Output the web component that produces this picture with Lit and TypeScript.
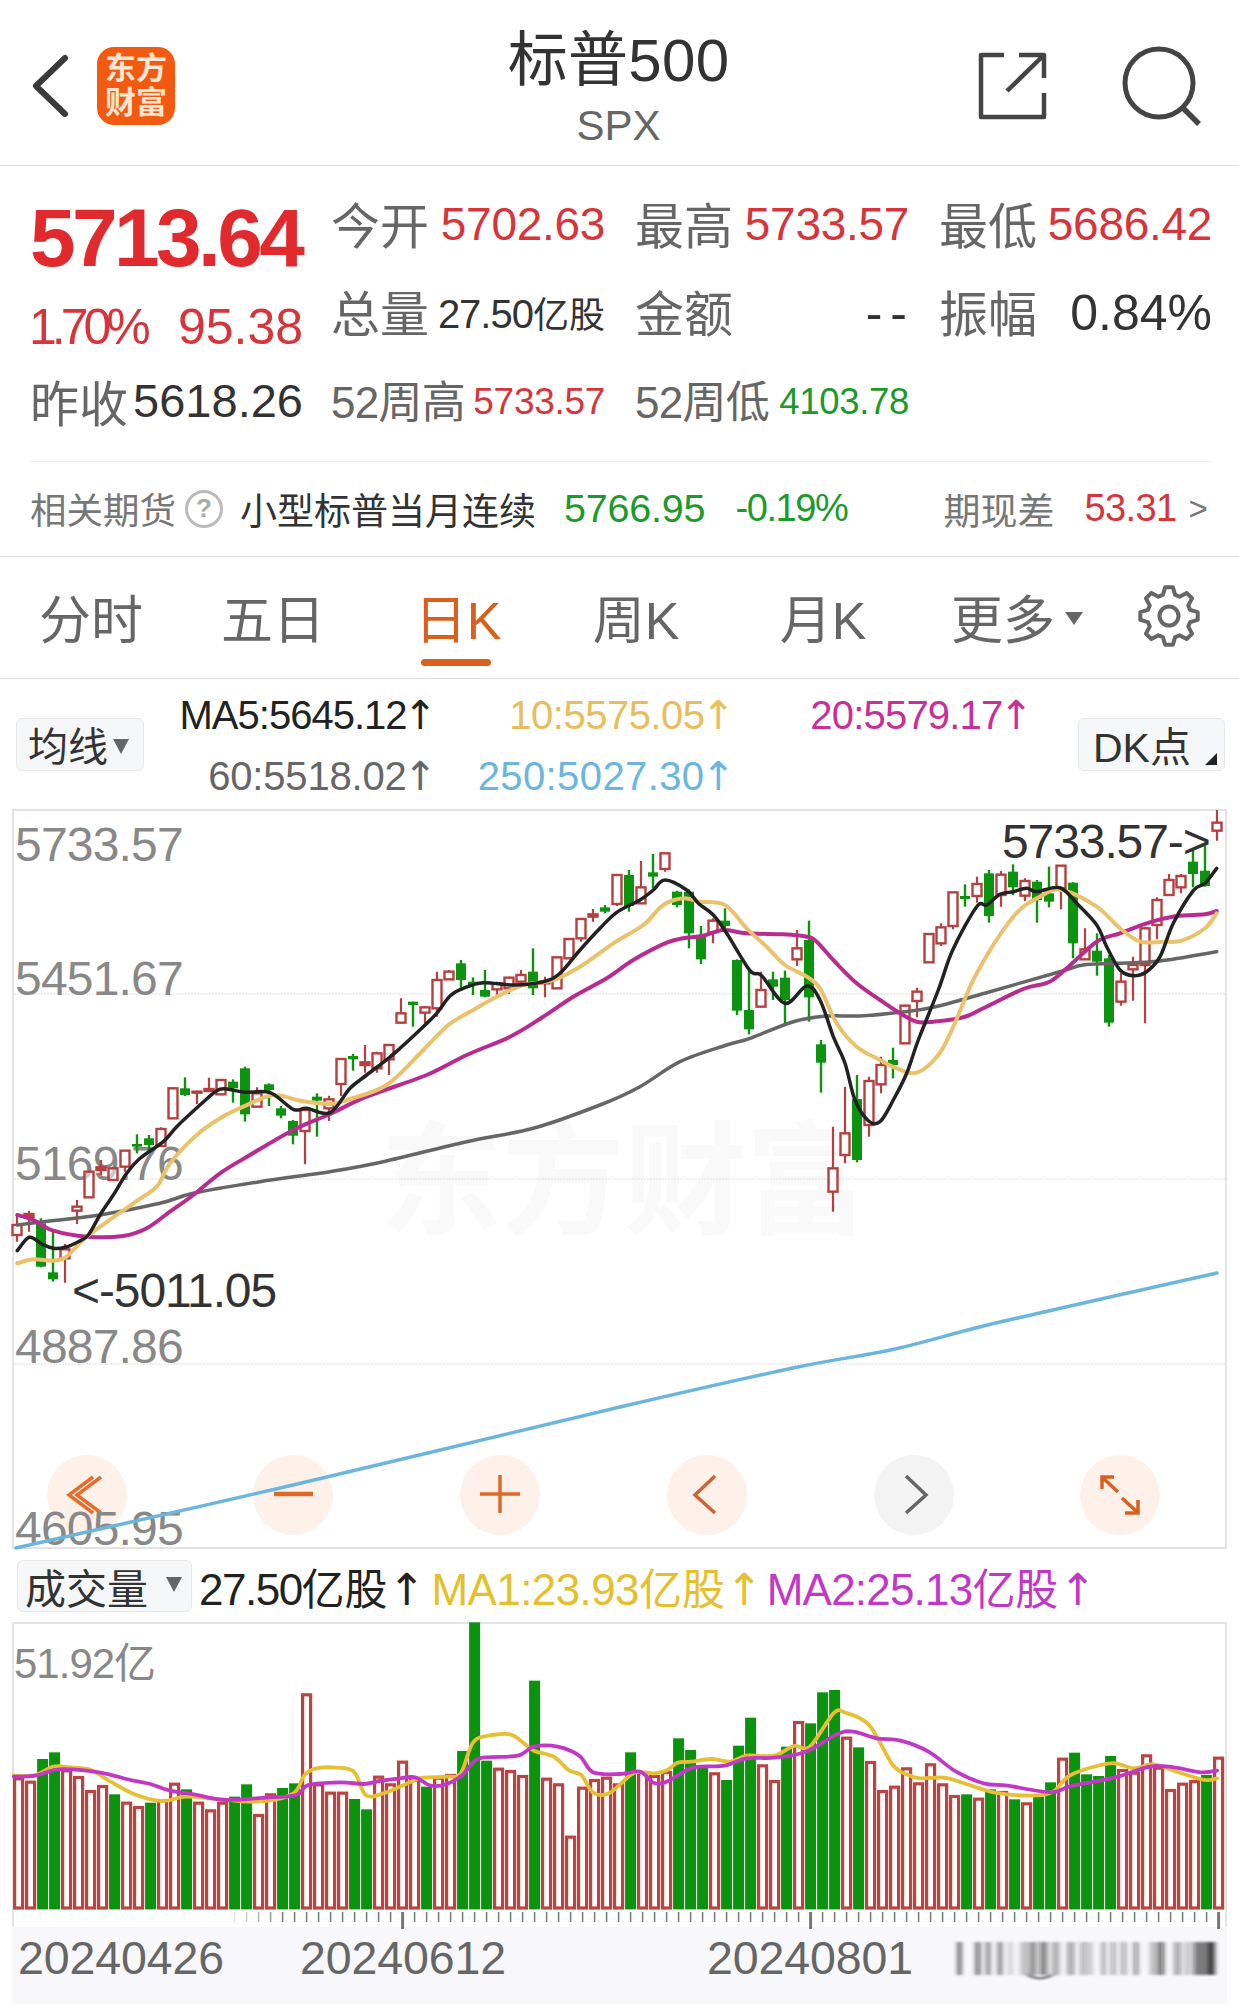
import { LitElement, html, css, svg } from "lit";
import { customElement } from "lit/decorators.js";

type P = [number, number];
const RED = "#b5403f";
const GREEN = "#0c930f";

const c11: [string, number, number, number, number][] = [
  ["r",525,555,585,605],["r",512,522,532,575],["g",535,550,680,682],["g",570,697,718,725],["r",612,628,655,728],
  ["r",480,500,512,552],["r",393,395,472,472],["r",360,382,390,405],["r",380,385,420,422],["r",330,332,380,395],
  ["g",283,312,320,340],["g",285,295,315,335],["r",262,267,318,320],["r",142,145,235,235],["g",112,145,165,168],
  ["r",152,155,157,193],["r",113,147,153,155],["r",118,120,163,165],["g",118,125,145,188],["g",80,85,223,245],
  ["r",142,160,200,202],["g",130,133,150,198],["g",198,205,227,235],["g",240,243,287,313],["r",205,210,273,373],
  ["g",160,170,182,290],["r",167,178,205,243],["r",55,57,132,168],["g",42,48,58,92],["r",15,67,75,98],
  ["r",35,40,85,98],["r",12,15,58,105],
];
const c5: [string, number, number, number, number][] = [
  ["r",595,640,668,670],["g",605,605,615,680],["r",620,622,638,670],["r",515,540,625,650],["r",510,515,538,540],
  ["g",480,490,540,565],["g",532,545,555,585],["g",510,570,590,592],["r",545,550,568,585],["r",530,533,565,582],
  ["r",510,525,545,550],["g",445,515,565,585],["r",530,545,550,592],["r",470,472,565,567],["r",415,417,475,477],
  ["r",355,357,415,425],["r",327,343,350,365],["g",315,322,335,340],["r",222,225,312,318],["g",210,225,318,335],
  ["r",183,262,310,312],["g",162,217,230,265],["r",158,160,207,215],["g",272,275,315,322],["g",268,275,400,445],
  ["g",378,405,478,492],["r",355,362,397,430],["g",325,362,378,385],["g",478,480,632,645],["g",510,630,688,703],
  ["r",515,570,620,622],["g",515,538,560,600],["g",512,533,600,670],["r",390,445,478,498],["g",362,420,592,665],
];
const c12: [string, number, number, number, number][] = [
  ["g",120,133,188,278],["r",380,505,575,635],["r",260,400,465,490],["g",225,297,480,487],["r",230,243,375,410],
  ["r",170,195,253,280],["g",143,180,195,235],["r",15,17,130,132],
];
const c6: [string, number, number, number, number][] = [
  ["r",563,575,603,652],["r",400,402,487,488],["r",370,382,430,438],["r",275,277,378,388],["g",253,288,297,320],
  ["r",230,252,288,308],["g",210,220,348,368],["r",213,224,285,320],["g",193,215,262,285],["r",235,243,287,303],
  ["g",240,245,300,368],["g",200,280,305,322],["r",195,197,265,328],["g",247,248,430,475],["r",385,448,478,480],
  ["g",400,452,485,527],["g",465,475,668,680],["r",520,545,605,617],["r",470,495,508,602],["r",380,385,495,670],
  ["r",292,300,375,418],["r",222,240,285,287],["r",222,228,262,280],["g",150,185,222,262],["g",138,212,258,260],
  ["r",30,68,92,122],
];
const candles = [
  ...c11.map((c) => [c[0], ...c.slice(1).map((v) => 1040 + (v as number) / 3)]),
  ...c5.map((c) => [c[0], ...c.slice(1).map((v) => 800 + (v as number) / 3)]),
  ...c12.map((c) => [c[0], ...c.slice(1).map((v) => 1000 + (v as number) / 3)]),
  ...c6.map((c) => [c[0], ...c.slice(1).map((v) => 800 + (v as number) / 3)]),
] as [string, number, number, number, number][];

const conv = (pts: number[][], x0: number, y0: number, sx = 3, sy = 3): P[] =>
  pts.map(([x, y]) => [x0 + x / sx, y0 + y / sy] as P);

function smooth(raw: P[]): string {
  const sorted = [...raw].sort((a, b) => a[0] - b[0]);
  const p: P[] = [];
  for (const q of sorted) if (!p.length || q[0] - p[p.length - 1][0] >= 3.5) p.push(q);
  let d = `M${p[0][0].toFixed(1)} ${p[0][1].toFixed(1)}`;
  for (let i = 0; i < p.length - 1; i++) {
    const a = p[Math.max(0, i - 1)], b = p[i], c = p[i + 1], e = p[Math.min(p.length - 1, i + 2)];
    const c1x = b[0] + (c[0] - a[0]) / 6, c1y = b[1] + (c[1] - a[1]) / 6;
    const c2x = c[0] - (e[0] - b[0]) / 6, c2y = c[1] - (e[1] - b[1]) / 6;
    d += ` C${c1x.toFixed(1)} ${c1y.toFixed(1)} ${c2x.toFixed(1)} ${c2y.toFixed(1)} ${c[0].toFixed(1)} ${c[1].toFixed(1)}`;
  }
  return d;
}

const ma5 = smooth([
  ...conv([[52,632],[88,592],[125,612],[160,625],[195,622],[235,605],[265,585],[300,525],[340,465],[380,400],[420,355],[490,305],[530,260],[600,195],[650,152],[680,147],[735,157],[810,158],[880,208],[920,205],[990,218],[1050,145],[1100,105],[1165,55]], 0, 1040),
  ...conv([[0,745],[70,680],[110,640],[150,588],[190,565],[250,548],[340,555],[430,545],[480,520],[540,450],[600,385],[650,337],[720,300],[760,270],[795,240],[860,270],[895,310],[940,345],[980,400],[1050,512],[1085,527],[1155,610],[1220,558]], 400, 800),
  ...conv([[60,600]], 800, 800),
  ...conv([[130,110],[165,190],[195,300],[235,362],[270,365],[310,300],[350,220],[385,120]], 790, 1000),
  ...conv([[415,570],[458,450],[530,320],[560,315],[600,283],[640,275],[680,265],[710,275],[780,263],[830,310],[890,375],[920,440],[960,510],[1000,527],[1040,515],[1080,470],[1120,370],[1180,272],[1215,250],[1250,205]], 800, 800),
]);
const ma10 = smooth([
  ...conv([[52,670],[100,658],[160,662],[200,650],[260,590],[400,490],[470,440],[510,370],[590,285],[660,235],[730,200],[820,165],[900,182],[990,192],[1040,180],[1160,135]], 0, 1040),
  ...conv([[70,750],[145,675],[220,630],[290,590],[370,555],[460,540],[540,500],[640,430],[730,375],[790,315],[850,295],[900,305],[975,315],[1040,385],[1100,440],[1155,495],[1220,530]], 400, 800),
  ...conv([[60,565],[110,670],[170,740],[240,780],[290,805],[350,818],[415,765],[460,680],[530,520],[640,350],[720,290],[785,270],[890,320],[960,385],[1020,425],[1090,425],[1145,422],[1215,385],[1250,340]], 800, 800),
]);
const ma20 = smooth([
  ...conv([[52,525],[100,540],[160,572],[260,590],[370,588],[440,565],[510,515],[580,465],[660,400],[750,345],[880,270],[990,222],[1100,170]], 0, 1040),
  ...conv([[80,825],[200,765],[330,710],[430,650],[520,590],[620,535],[700,480],[800,428],[850,415],[910,407],[970,390],[1040,400],[1150,403],[1220,410]], 400, 800),
  ...conv([[50,425],[100,480],[170,550],[240,600],[300,640],[350,665],[400,665],[490,652],[550,625],[670,567],[745,547],[800,505],[890,425],[960,400],[1040,370],[1130,348],[1215,343],[1250,333]], 800, 800),
]);
const ma60 = smooth([
  ...conv([[52,555],[130,545],[300,525],[480,490],[580,460],[780,425],[990,395],[1150,365]], 0, 1040),
  ...conv([[200,1025],[400,985],[600,915],[720,860],[840,785],[980,735],[1050,715],[1180,665]], 400, 800),
  ...conv([[80,648],[180,648],[300,637],[400,622],[570,575],[790,512],[850,495],[950,490],[1080,483],[1250,455]], 800, 800),
]);
const ma250 = smooth([[16,1548],[293,1485],[620,1407],[793,1368],[895,1349],[1000,1322],[1217,1273]]);

const volTopsA = "r502 r512 g447 g427 r478 r498 r540 r525 g553 r575 r588 g578 r568 r518 g538 r575 r598 r575 g560 g523 r612 r550 g534 g520 r250 r520 r545 r545 g567 g598 r497 r520 r452 r505 g530 r500 r492 g423 g37 g452 r473 r480 r495 g212 r503 r520 r677 r530 r507 r500 r520 g427 r483 r495 r483 g385 g420 g470 r487 g510 g407 g323 r463 r510 g410 r333 g340 g247 g240 r380 g412 r453 r540 r527 r472 r517 r460 r520 r555 g553 r563 g538 r543 g568 r577 g560 g517 r443 g428 g493 g498 g438 r477 r485 r433 r470 r537 r518 r510 g495 r440";
const vols = volTopsA.split(" ").map((s) => ({ k: s[0], top: 1610 + Number(s.slice(1)) / 3 }));
const VB = 1908;

const sx = 620 / 1568;
const volA = smooth([
  ...conv([[35,497],[90,495],[135,470],[180,472],[230,480],[280,515],[340,553],[410,573],[470,560],[550,567],[650,575],[740,552],[770,495],[800,475],[850,473],[895,485],[925,555],[970,550],[1040,515],[1070,503],[1130,500],[1165,490],[1195,400],[1230,378],[1290,373],[1320,395],[1350,422],[1400,440],[1440,482],[1470,495],[1500,548],[1540,550]], 0, 1610, 1 / sx),
  ...conv([[30,492],[60,487],[90,490],[120,480],[145,458],[180,455],[230,447],[280,455],[320,437],[390,437],[440,408],[480,410],[540,310],[570,308],[630,345],[690,465],[730,495],[760,505],[820,503],[870,520],[950,548],[1040,557],[1095,545],[1140,495],[1240,460],[1300,475],[1350,463],[1420,490],[1480,510],[1510,505]], 620, 1610, 1 / sx),
]);
const volB = smooth([
  ...conv([[35,500],[90,497],[150,478],[250,487],[330,510],[380,522],[430,542],[490,553],[570,570],[680,562],[750,555],[780,525],[860,517],[920,522],[960,513],[1010,505],[1050,502],[1090,527],[1130,522],[1170,495],[1200,453],[1230,442],[1310,437],[1350,410],[1410,410],[1465,437],[1500,487]], 0, 1610, 1 / sx),
  ...conv([[0,492],[50,485],[85,518],[115,517],[170,480],[200,470],[265,467],[320,445],[390,443],[470,425],[550,372],[590,365],[650,385],[710,392],[780,425],[850,485],[920,520],[980,527],[1090,547],[1140,528],[1250,503],[1340,470],[1400,472],[1470,487],[1510,482]], 620, 1610, 1 / sx),
]);

const smear: [number, number, number][] = [
  [855,7,.9],[900,10,.7],[927,8,.65],[957,8,.7],[985,5,.4],[1012,40,.22],[1040,12,.35],[1062,18,.55],[1092,20,.3],[1132,16,.4],[1165,14,.35],[1187,6,.4],[1220,5,.7],[1242,10,.4],[1268,12,.35],[1300,10,.5],[1340,35,.25],[1365,10,.6],[1402,16,.4],[1430,10,.3],[1450,50,.55],[1490,14,.8],
];

function gearPath(cx: number, cy: number, ro: number, ri: number, n: number): string {
  let d = "";
  const step = (Math.PI * 2) / n;
  for (let i = 0; i < n; i++) {
    const a = i * step - Math.PI / 2;
    const pts: P[] = [
      [ri, a - step * 0.36], [ro, a - step * 0.17], [ro, a + step * 0.17], [ri, a + step * 0.36],
    ];
    pts.forEach(([r, t], j) => {
      const x = cx + r * Math.cos(t), y = cy + r * Math.sin(t);
      d += `${i === 0 && j === 0 ? "M" : "L"}${x.toFixed(1)} ${y.toFixed(1)} `;
    });
  }
  return d + "Z";
}

@customElement("app-root")
export class AppRoot extends LitElement {
  static styles = css`
    :host { display: block; width: 1239px; height: 2004px; background: #fff; overflow: hidden;
      font-family: "Liberation Sans", "Noto Sans CJK SC", sans-serif; color: #333; }
    svg { display: block; overflow: visible; }
    svg text { font-family: "Liberation Sans", "Noto Sans CJK SC", sans-serif; }

    .head { height: 165px; border-bottom: 1px solid #dcdcdc; display: grid; grid-template-columns: 1fr auto 1fr; align-items: center; }
    .head-l { display: flex; align-items: center; padding: 7px 0 0 31px; gap: 28px; }
    .logo { width: 78px; height: 78px; border-radius: 17px; background: #f25a12; color: #fde6d4; font-weight: 700; font-size: 31px; line-height: 34px; text-align: center; display: flex; flex-direction: column; justify-content: center; }
    .title { text-align: center; padding: 11px 2px 0 0; }
    .title .name { font-size: 60px; line-height: 66px; color: #333; letter-spacing: .3px; }
    .title .code { font-size: 42px; line-height: 46px; color: #666; margin-top: 9px; }
    .head-r { display: flex; justify-content: flex-end; align-items: center; gap: 76px; padding: 7px 37px 0 0; }

    .stats { margin: 0 27px 0 30px; padding: 12px 0 16px; border-bottom: 1px solid #f1f1f1; display: grid; grid-template-columns: 271px 274px 274px 273px; column-gap: 30px; grid-auto-rows: 89px; align-items: center; }
    .cell { display: flex; justify-content: space-between; align-items: center; white-space: nowrap; }
    .wide { margin-right: -2px; }
    .lb { font-size: 49px; color: #666; }
    .lb.up { margin-top: -3px; }
    .v45 { font-size: 46px; letter-spacing: -.3px; margin-top: 3px; }
    .v47 { font-size: 47px; }
    .red { color: #d5353b; }
    .green { color: #1a9a2a; }
    .dark { color: #333; }
    .big { font-size: 82px; font-weight: 700; letter-spacing: -3.6px; color: #e02a2e; line-height: 1; margin-top: 30px; }
    .chgrow { margin-top: 30px; }
    .chg { font-size: 50px; color: #d5353b; }
    .chg.tight { letter-spacing: -5px; margin-left: -1px; }
    .amt { font-size: 40px; letter-spacing: -1px; color: #333; }
    .amt i { font-style: normal; font-size: 36px; letter-spacing: 0; }
    .amp { font-size: 50px; color: #333; margin-top: 2px; }
    .dash { letter-spacing: 8px; margin-right: -6px; }
    .lb52 { font-size: 44px; color: #666; letter-spacing: -.7px; margin-top: -3px; }
    .v38 { font-size: 37px; letter-spacing: -.3px; margin-top: 2px; }
    .v38.green { font-size: 36.5px; }

    .fut { height: 93px; padding-bottom: 1px; border-bottom: 1px solid #dcdcdc; display: flex; align-items: center; padding-left: 30px; white-space: nowrap; }
    .fut .a { font-size: 36.5px; color: #777; }
    .qm { width: 32px; height: 32px; border: 3px solid #bbb; border-radius: 50%; color: #aaa; font-size: 26px; font-weight: 700; display: flex; align-items: center; justify-content: center; margin: 0 17px 0 9px; }
    .fut .b { font-size: 37px; color: #333; width: 324px; }
    .fut .n { font-size: 39.5px; letter-spacing: -.2px; color: #1c9a2b; }
    .fut .p { font-size: 38px; letter-spacing: -1.4px; color: #1c9a2b; margin-left: 30px; width: 208px; }
    .fut .c { font-size: 37px; color: #777; width: 141px; }
    .fut .d { font-size: 38px; letter-spacing: -.6px; color: #d5353b; width: 104px; }
    .fut .e { font-size: 33px; color: #777; }

    .tabs { height: 118px; padding-bottom: 3px; border-bottom: 1px solid #dcdcdc; display: grid; grid-template-columns: 182px 182px 188px 168px 206px 182px 1fr; align-items: center; }
    .tab { font-size: 52px; color: #666; text-align: center; position: relative; white-space: nowrap; }
    .tab.on { color: #d9601a; }
    .tab.on::after { content: ""; position: absolute; left: 57px; width: 70px; top: 80px; height: 7px; border-radius: 4px; background: #d9601a; }
    .tab .tri { display: inline-block; width: 0; height: 0; border-left: 9px solid transparent; border-right: 9px solid transparent; border-top: 13px solid #666; margin-left: 10px; vertical-align: 14px; }
    .gear { display: flex; padding-left: 30px; }

    .ma { height: 130px; display: flex; align-items: center; padding-left: 16px; }
    .sel { box-sizing: border-box; background: #f6f7f9; border: 1px solid #e8e8e8; border-radius: 6px; display: flex; align-items: center; white-space: nowrap; color: #333; }
    .sel .t { width: 0; height: 0; border-left: 8px solid transparent; border-right: 8px solid transparent; border-top: 15px solid #666; }
    .junx { width: 128px; height: 53px; font-size: 40px; padding-left: 11px; gap: 5px; }
    .junx .t { margin-top: 4px; }
    .grid { display: grid; grid-template-columns: 287px 298px 298px; grid-auto-rows: 61px; align-items: center; justify-items: end; font-size: 40px; white-space: nowrap; padding-top: 2px; }
    .ar { font-family: "DejaVu Sans", sans-serif; letter-spacing: 0; margin: 0 -6px 0 -3px; }
    .m5 { color: #222; letter-spacing: -1px; }
    .m10 { color: #e8bd5e; letter-spacing: -.5px; }
    .m20 { color: #c82f97; letter-spacing: -.8px; }
    .m60 { color: #666; letter-spacing: -.2px; }
    .m250 { color: #6cb6de; letter-spacing: .4px; }
    .dk { width: 147px; height: 53px; margin-left: 51px; font-size: 41px; padding-left: 14px; position: relative; }
    .dk::after { content: ""; position: absolute; right: 7px; bottom: 5px; border-left: 12px solid transparent; border-bottom: 12px solid #222; }

    .chart { margin-left: 12px; width: 1215px; }
    .axis { fill: #888; font-size: 48px; letter-spacing: -.8px; }
    .anno { fill: #333; font-size: 48px; letter-spacing: -1.1px; }
    .wm { fill: #f9f9f9; font-size: 122px; font-weight: 700; }
    .vl { fill: #888; font-size: 42px; letter-spacing: -1px; }
    .dt { fill: #666; font-size: 46.5px; letter-spacing: -.1px; }

    .vrow { height: 73px; display: flex; align-items: center; padding-left: 17px; white-space: nowrap; font-size: 44px; }
    .vrow .ar { margin: 0 -6px 0 1px; }
    .vsel { width: 175px; height: 52px; font-size: 41px; padding-left: 7px; gap: 18px; margin-right: 7px; }
    .vsel .t { margin-top: -2px; }
    .vv { color: #222; margin-right: 12px; letter-spacing: -1.5px; }
    .v1 { color: #e5c02c; margin-right: 10px; letter-spacing: -.6px; }
    .v2 { color: #c238c6; letter-spacing: -.8px; }
    .vrow i { font-style: normal; font-size: 43px; letter-spacing: 0; }
  `;

  private btn(cx: number, fill = "#fdf1ea") {
    return svg`<circle cx=${cx} cy="1495" r="40" fill=${fill}></circle>`;
  }

  private candle(c: [string, number, number, number, number], i: number) {
    const x = 17 + 12 * i;
    const col = c[0] === "r" ? RED : GREEN;
    if (c[0] === "r") {
      return svg`<path d="M${x} ${c[1]}V${c[2]}M${x} ${c[3]}V${c[4]}" stroke=${col} stroke-width="2.2" fill="none"></path>
        <rect x=${x - 4.5} y=${c[2]} width="9" height=${Math.max(c[3] - c[2], 1)} fill=${c[3] - c[2] < 4 ? col : "#fff"} fill-opacity=${c[3] - c[2] < 4 ? 1 : 0.55} stroke=${col} stroke-width="2.4"></rect>`;
    }
    return svg`<path d="M${x} ${c[1]}V${c[4]}" stroke=${col} stroke-width="2.4" fill="none"></path>
      <rect x=${x - 5} y=${c[2]} width="10" height=${Math.max(c[3] - c[2], 2)} fill=${col}></rect>`;
  }

  render() {
    const line = (d: string, col: string, w = 3.5) =>
      svg`<path d=${d} fill="none" stroke=${col} stroke-width=${w} stroke-linecap="round" stroke-linejoin="round"></path>`;
    const up = html`<span class="ar">↑</span>`;
    return html`
      <div class="head">
        <div class="head-l">
          <svg width="38" height="64" viewBox="0 0 38 64"><path d="M34 4 L5 32 L34 60" fill="none" stroke="#3a3a3a" stroke-width="6" stroke-linecap="round" stroke-linejoin="round"></path></svg>
          <div class="logo"><div>东方</div><div>财富</div></div>
        </div>
        <div class="title"><div class="name">标普500</div><div class="code">SPX</div></div>
        <div class="head-r">
          <svg width="68" height="68" viewBox="0 0 68 68"><path d="M26 3H3V65H66V41M41 3H66V26M66 3L29 39" fill="none" stroke="#444" stroke-width="4.5" stroke-linejoin="round"></path></svg>
          <svg width="80" height="80" viewBox="0 0 80 80"><circle cx="37" cy="37" r="34" fill="none" stroke="#444" stroke-width="5"></circle><path d="M61 62L77 78" stroke="#444" stroke-width="5.5"></path></svg>
        </div>
      </div>

      <div class="stats">
        <div class="big">5713.64</div>
        <div class="cell"><span class="lb">今开</span><span class="v45 red">5702.63</span></div>
        <div class="cell"><span class="lb">最高</span><span class="v45 red">5733.57</span></div>
        <div class="cell"><span class="lb">最低</span><span class="v45 red">5686.42</span></div>

        <div class="cell chgrow wide"><span class="chg tight">1.70%</span><span class="chg">95.38</span></div>
        <div class="cell"><span class="lb up">总量</span><span class="amt">27.50<i>亿股</i></span></div>
        <div class="cell"><span class="lb up">金额</span><span class="amp dash">--</span></div>
        <div class="cell"><span class="lb up">振幅</span><span class="amp">0.84%</span></div>

        <div class="cell wide"><span class="lb">昨收</span><span class="v47 dark">5618.26</span></div>
        <div class="cell"><span class="lb52">52周高</span><span class="v38 red">5733.57</span></div>
        <div class="cell"><span class="lb52">52周低</span><span class="v38 green">4103.78</span></div>
      </div>

      <div class="fut">
        <span class="a">相关期货</span><span class="qm">?</span>
        <span class="b">小型标普当月连续</span>
        <span class="n">5766.95</span><span class="p">-0.19%</span>
        <span class="c">期现差</span><span class="d">53.31</span><span class="e">&gt;</span>
      </div>

      <div class="tabs">
        <div class="tab">分时</div>
        <div class="tab">五日</div>
        <div class="tab on">日K</div>
        <div class="tab">周K</div>
        <div class="tab">月K</div>
        <div class="tab">更多<span class="tri"></span></div>
        <div class="gear">
          <svg width="62" height="62" viewBox="0 0 62 62"><path d=${gearPath(31, 31, 29, 22, 8)} fill="none" stroke="#666" stroke-width="4" stroke-linejoin="round"></path><circle cx="31" cy="31" r="9.5" fill="none" stroke="#666" stroke-width="4"></circle></svg>
        </div>
      </div>

      <div class="ma">
        <div class="sel junx">均线<span class="t"></span></div>
        <div class="grid">
          <span class="m5">MA5:5645.12${up}</span><span class="m10">10:5575.05${up}</span><span class="m20">20:5579.17${up}</span>
          <span class="m60">60:5518.02${up}</span><span class="m250">250:5027.30${up}</span>
        </div>
        <div class="sel dk">DK点</div>
      </div>

      <div class="chart">
        <svg width="1215" height="740" viewBox="12 809 1215 740">
          <rect x="13" y="810" width="1213" height="738" fill="#fff" stroke="#e3e3e3" stroke-width="2"></rect>
          <text class="wm" x="380" y="1224">东方财富</text>
          ${[994, 1179, 1364].map((y) => svg`<line x1="14" x2="1225" y1=${y} y2=${y} stroke="#dedede" stroke-width="1" stroke-dasharray="2 1"></line>`)}
          ${this.btn(87)}${this.btn(293)}${this.btn(500)}${this.btn(707)}${this.btn(914, "#f3f3f3")}${this.btn(1120)}
          <path d="M93 1477L69 1495L93 1513 M101 1477L77 1495L101 1513" fill="none" stroke="#e0702f" stroke-width="3.5"></path>
          <path d="M274 1494H313" stroke="#dc6a2a" stroke-width="4.5"></path>
          <path d="M480 1494H520M500 1475V1513" stroke="#dc6a2a" stroke-width="3.5"></path>
          <path d="M715 1476L695 1495L715 1513" fill="none" stroke="#cc6436" stroke-width="3.5"></path>
          <path d="M906 1476L926 1495L906 1513" fill="none" stroke="#666" stroke-width="3.5"></path>
          <path d="M1102 1489V1477H1114M1103 1478L1118 1492M1138 1500V1513H1125M1137 1512L1122 1498" fill="none" stroke="#d9601a" stroke-width="3.5"></path>
          <text class="axis" x="15" y="861">5733.57</text>
          <text class="axis" x="15" y="995">5451.67</text>
          <text class="axis" x="15" y="1180">5169.76</text>
          <text class="axis" x="15" y="1363">4887.86</text>
          <text class="axis" x="15" y="1545">4605.95</text>
          ${candles.map((c, i) => this.candle(c, i))}
          ${line(ma250, "#6cb6de")}
          ${line(ma60, "#666")}
          ${line(ma20, "#b92c8f", 4)}
          ${line(ma10, "#eac26c", 4)}
          ${line(ma5, "#222")}
          <text class="anno" x="1002" y="858">5733.57-&gt;</text>
          <text class="anno" x="72" y="1307">&lt;-5011.05</text>
        </svg>
      </div>

      <div class="vrow">
        <div class="sel vsel">成交量<span class="t"></span></div>
        <span class="vv">27.50<i>亿股</i>${up}</span>
        <span class="v1">MA1:23.93<i>亿股</i>${up}</span>
        <span class="v2">MA2:25.13<i>亿股</i>${up}</span>
      </div>

      <div class="chart">
        <svg width="1215" height="382" viewBox="12 1622 1215 382">
          <defs><filter id="sm" x="-5%" y="-20%" width="110%" height="140%"><feGaussianBlur stdDeviation="2.4 0.8"></feGaussianBlur></filter></defs>
          <rect x="12" y="1927" width="1215" height="77" fill="#f8f8fa"></rect>
          <path d="M13 1927V1623H1226V1927" fill="none" stroke="#e3e3e3" stroke-width="2"></path>
          ${vols.map((v, i) => {
            const x = 18.6 + 12 * i;
            return v.k === "r"
              ? svg`<rect x=${x - 4} y=${v.top + 1.5} width="8" height=${VB - v.top - 1.5} fill="#fff" stroke="#bb4441" stroke-width="3.2"></rect>`
              : svg`<rect x=${x - 5.5} y=${v.top} width="11" height=${VB + 1.4 - v.top} fill="#0b930d"></rect>`;
          })}
          ${line(volA, "#e6bf33", 3.8)}
          ${line(volB, "#c238c6", 3.8)}
          ${Array.from({ length: 83 }, (_, k) => {
            const i = k + 18;
            const x = 18.6 + 12 * i;
            const major = i === 32 || i === 66 || i === 100;
            const op = i < 22 ? 0.2 + (i - 18) * 0.18 : 1;
            return svg`<line x1=${x} x2=${x} y1="1912" y2=${major ? 1929 : 1922} stroke="#777" stroke-width=${major ? 3 : 1.5} opacity=${op}></line>`;
          })}
          <text class="vl" x="14" y="1678">51.92亿</text>
          <text class="dt" x="18" y="1974">20240426</text>
          <text class="dt" x="300" y="1974">20240612</text>
          <text class="dt" x="707" y="1974">20240801</text>
          <g filter="url(#sm)">
            ${smear.map(([x, w, o]) => svg`<rect x=${620 + x * sx} y="1942" width=${w * sx} height="33" fill="#111" opacity=${o}></rect>`)}
            <path d="M1028 1975Q1040 1982 1052 1975" fill="none" stroke="#222" stroke-width="1.5"></path>
          </g>
        </svg>
      </div>
    `;
  }
}
